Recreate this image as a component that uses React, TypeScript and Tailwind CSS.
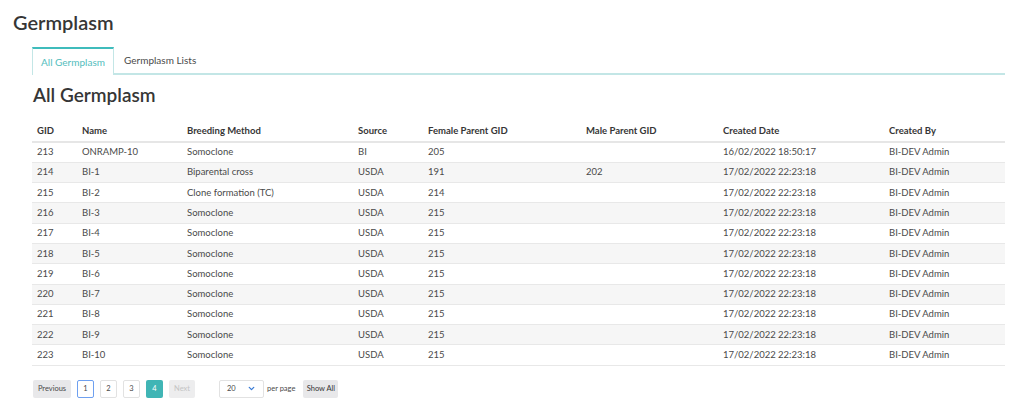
import { ChevronDown } from "lucide-react"

const rows = [
  ["213", "ONRAMP-10", "Somoclone", "BI", "205", "", "16/02/2022 18:50:17", "BI-DEV Admin"],
  ["214", "BI-1", "Biparental cross", "USDA", "191", "202", "17/02/2022 22:23:18", "BI-DEV Admin"],
  ["215", "BI-2", "Clone formation (TC)", "USDA", "214", "", "17/02/2022 22:23:18", "BI-DEV Admin"],
  ["216", "BI-3", "Somoclone", "USDA", "215", "", "17/02/2022 22:23:18", "BI-DEV Admin"],
  ["217", "BI-4", "Somoclone", "USDA", "215", "", "17/02/2022 22:23:18", "BI-DEV Admin"],
  ["218", "BI-5", "Somoclone", "USDA", "215", "", "17/02/2022 22:23:18", "BI-DEV Admin"],
  ["219", "BI-6", "Somoclone", "USDA", "215", "", "17/02/2022 22:23:18", "BI-DEV Admin"],
  ["220", "BI-7", "Somoclone", "USDA", "215", "", "17/02/2022 22:23:18", "BI-DEV Admin"],
  ["221", "BI-8", "Somoclone", "USDA", "215", "", "17/02/2022 22:23:18", "BI-DEV Admin"],
  ["222", "BI-9", "Somoclone", "USDA", "215", "", "17/02/2022 22:23:18", "BI-DEV Admin"],
  ["223", "BI-10", "Somoclone", "USDA", "215", "", "17/02/2022 22:23:18", "BI-DEV Admin"],
]

const headers = ["GID", "Name", "Breeding Method", "Source", "Female Parent GID", "Male Parent GID", "Created Date", "Created By"]
const widths = ["w-[45px]", "w-[105px]", "w-[171px]", "w-[70px]", "w-[158px]", "w-[137px]", "w-[166px]", ""]

export default function App() {
  return (
    <div className="min-h-[412px] bg-white font-['Lato',sans-serif] text-[#4a4a4a]">
      <h1 className="pl-[13px] pt-[10px] text-[20px] font-semibold leading-[24px] text-[#363636]">Germplasm</h1>

      <div className="mx-[32px] mt-[13px] w-[973px]">
        {/* Tabs */}
        <div className="flex border-b-2 border-[#c3e6e6] text-[10px]">
          <div className="-mb-[2px] flex h-[28px] w-[82px] items-center justify-center border-x border-t-2 border-x-[#c3e6e6] border-t-[#3fbcbc] bg-white text-[#52bdbd]">
            All Germplasm
          </div>
          <div className="flex h-[26px] items-center px-[10px] text-[#4a4a4a]">Germplasm Lists</div>
        </div>

        <h2 className="mt-[8px] pl-[1px] text-[19px] font-semibold leading-[24px] text-[#363636]">All Germplasm</h2>

        {/* Table */}
        <table className="mt-[15px] w-full border-collapse text-[9.5px]">
          <thead>
            <tr className="h-[20px] border-b-2 border-[#e6e6e6]">
              {headers.map((h, i) => (
                <th key={h} className={`px-[5px] text-left font-bold text-[#363636] ${widths[i]}`}>
                  {h}
                </th>
              ))}
            </tr>
          </thead>
          <tbody>
            {rows.map((r, i) => (
              <tr key={r[0]} className={`h-[20.3px] border-b border-[#e8e8e8] ${i % 2 === 1 ? "bg-[#f6f6f6]" : "bg-white"}`}>
                {r.map((c, j) => (
                  <td key={j} className="px-[5px]">
                    {c}
                  </td>
                ))}
              </tr>
            ))}
          </tbody>
        </table>

        {/* Pagination */}
        <div className="mt-[14px] flex items-center pl-[1px] text-[7.5px]">
          <button className="h-[18px] w-[38px] rounded-[2px] bg-[#e8e8ea] text-[#4a4a4a]">Previous</button>
          <button className="ml-[6px] h-[18px] w-[17px] rounded-[2px] border border-[#6ea0f0] bg-white text-[#4a4a4a]">1</button>
          <button className="ml-[6px] h-[18px] w-[17px] rounded-[2px] border border-[#e2e2e2] bg-white text-[#4a4a4a]">2</button>
          <button className="ml-[6px] h-[18px] w-[17px] rounded-[2px] border border-[#e2e2e2] bg-white text-[#4a4a4a]">3</button>
          <button className="ml-[6px] h-[18px] w-[17px] rounded-[2px] bg-[#40b5b5] text-white">4</button>
          <button className="ml-[6px] h-[18px] w-[26px] rounded-[2px] bg-[#ededee] text-[#c4c4c4]">Next</button>
          <div className="ml-[24px] flex h-[18px] w-[45px] items-center justify-between rounded-[2px] border border-[#e2e2e2] bg-white px-[7px] text-[#4a4a4a]">
            <span>20</span>
            <ChevronDown className="h-[9px] w-[9px] text-[#3a7bd5]" strokeWidth={3.5} />
          </div>
          <span className="ml-[3px] text-[#4a4a4a]">per page</span>
          <button className="ml-[8px] h-[18px] w-[35px] rounded-[2px] bg-[#e8e8ea] text-[#363636]">Show All</button>
        </div>
      </div>
    </div>
  )
}
